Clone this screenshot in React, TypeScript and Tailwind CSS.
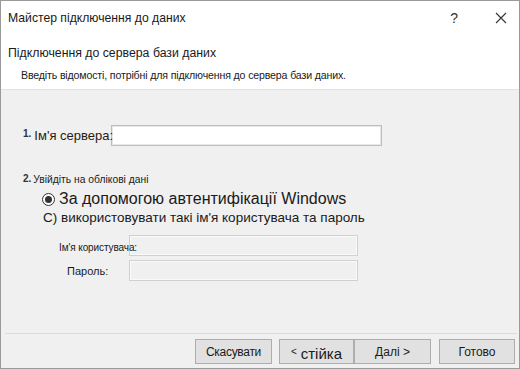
import React from "react";

const font = { fontFamily: '"Liberation Sans", Arial, sans-serif' };

function Field({ disabled = false, className = "" }: { disabled?: boolean; className?: string }) {
    return (
        <div
            className={`h-[21px] border ${
                disabled ? "border-[#d0d0d0] bg-[#f0f0f0] shadow-[inset_0_0_0_1px_#fafafa]" : "border-[#bdbdbd] bg-white shadow-[inset_0_0_0_1px_#e8e8e8]"
            } ${className}`}
        />
    );
}

function Btn({ children, className = "" }: { children: React.ReactNode; className?: string }) {
    return (
        <div
            className={`flex h-[25px] items-center justify-center border border-[#adadad] bg-[#e1e1e1] text-[12px] text-[#1a1a1a] ${className}`}
        >
            {children}
        </div>
    );
}

export default function App() {
    return (
        <div
            style={font}
            className="flex h-[369px] w-[520px] flex-col border border-[#9a9a9a] bg-[#f0f0f0] text-[#1a1a1a]"
        >
            {/* Header */}
            <div className="flex h-[89px] flex-col border-b border-[#e2e2e2] bg-white">
                <div className="flex h-[34px] items-center pl-[7px] pr-[12px] pt-[1px]">
                    <span className="text-[12.2px]">Майстер підключення до даних</span>
                    <span className="ml-auto mr-[37px] text-[14px] text-[#333]">?</span>
                    <svg width="12" height="12" viewBox="0 0 12 12" className="mt-[-2px]">
                        <path d="M1 1L11 11M11 1L1 11" stroke="#333" strokeWidth="1.1" fill="none" />
                    </svg>
                </div>
                <div className="pl-[7px] pt-[9px] text-[12.3px]">Підключення до сервера бази даних</div>
                <div className="pl-[20px] pt-[6px] text-[10.6px] tracking-[-0.15px]">
                    Введіть відомості, потрібні для підключення до сервера бази даних.
                </div>
            </div>

            {/* Body */}
            <div className="flex flex-1 flex-col pl-[22px]">
                <div className="mt-[35px] flex items-center">
                    <span className="mt-[-4px] text-[10px] font-bold text-[#333]">1.</span>
                    <span className="relative z-10 ml-[3px] text-[13px] text-[#2a1a10]">Ім'я сервера:</span>
                    <Field className="ml-[-2px] w-[271px]" />
                </div>

                <div className="mt-[26px] flex items-center">
                    <span className="mt-[-3px] text-[10px] font-bold text-[#333]">2.</span>
                    <span className="ml-[2px] text-[10.3px]">Увійдіть на облікові дані</span>
                </div>

                <div className="ml-[19px] mt-[2px] flex h-[20px] items-center">
                    <div className="flex h-[13px] w-[13px] items-center justify-center rounded-full border border-[#333] bg-white">
                        <div className="h-[7px] w-[7px] rounded-full bg-[#333]" />
                    </div>
                    <span className="ml-[4px] text-[16px] leading-[20px]">За допомогою автентифікації Windows</span>
                </div>
                <div className="ml-[20px] text-[13.5px] leading-[17px]">С) використовувати такі ім'я користувача та пароль</div>

                <div className="mt-[9px] flex items-center">
                    <span className="relative z-10 ml-[36px] mt-[3px] w-[70px] whitespace-nowrap text-[10px] tracking-[-0.1px]">
                        Ім'я користувача:
                    </span>
                    <Field disabled className="w-[229px]" />
                </div>
                <div className="mt-[4px] flex items-center">
                    <span className="ml-[44px] w-[62px] text-[11px]">Пароль:</span>
                    <Field disabled className="w-[229px]" />
                </div>

                <div className="mr-[2px] ml-[-18px] mt-auto border-b border-[#dcdcdc]" />
                <div className="mb-[4px] mt-[5px] flex pl-[172px]">
                    <Btn className="w-[77px] tracking-[-0.3px]">Скасувати</Btn>
                    <Btn className="ml-[7px] w-[75px]">
                        <span className="text-[10px]">&lt;</span>
                        <span className="ml-[4px] mt-[3px] text-[15px] leading-none">стійка</span>
                    </Btn>
                    <Btn className="w-[77px] text-[11px]">Далі &gt;</Btn>
                    <Btn className="ml-[8px] w-[76px]">Готово</Btn>
                </div>
            </div>
        </div>
    );
}
